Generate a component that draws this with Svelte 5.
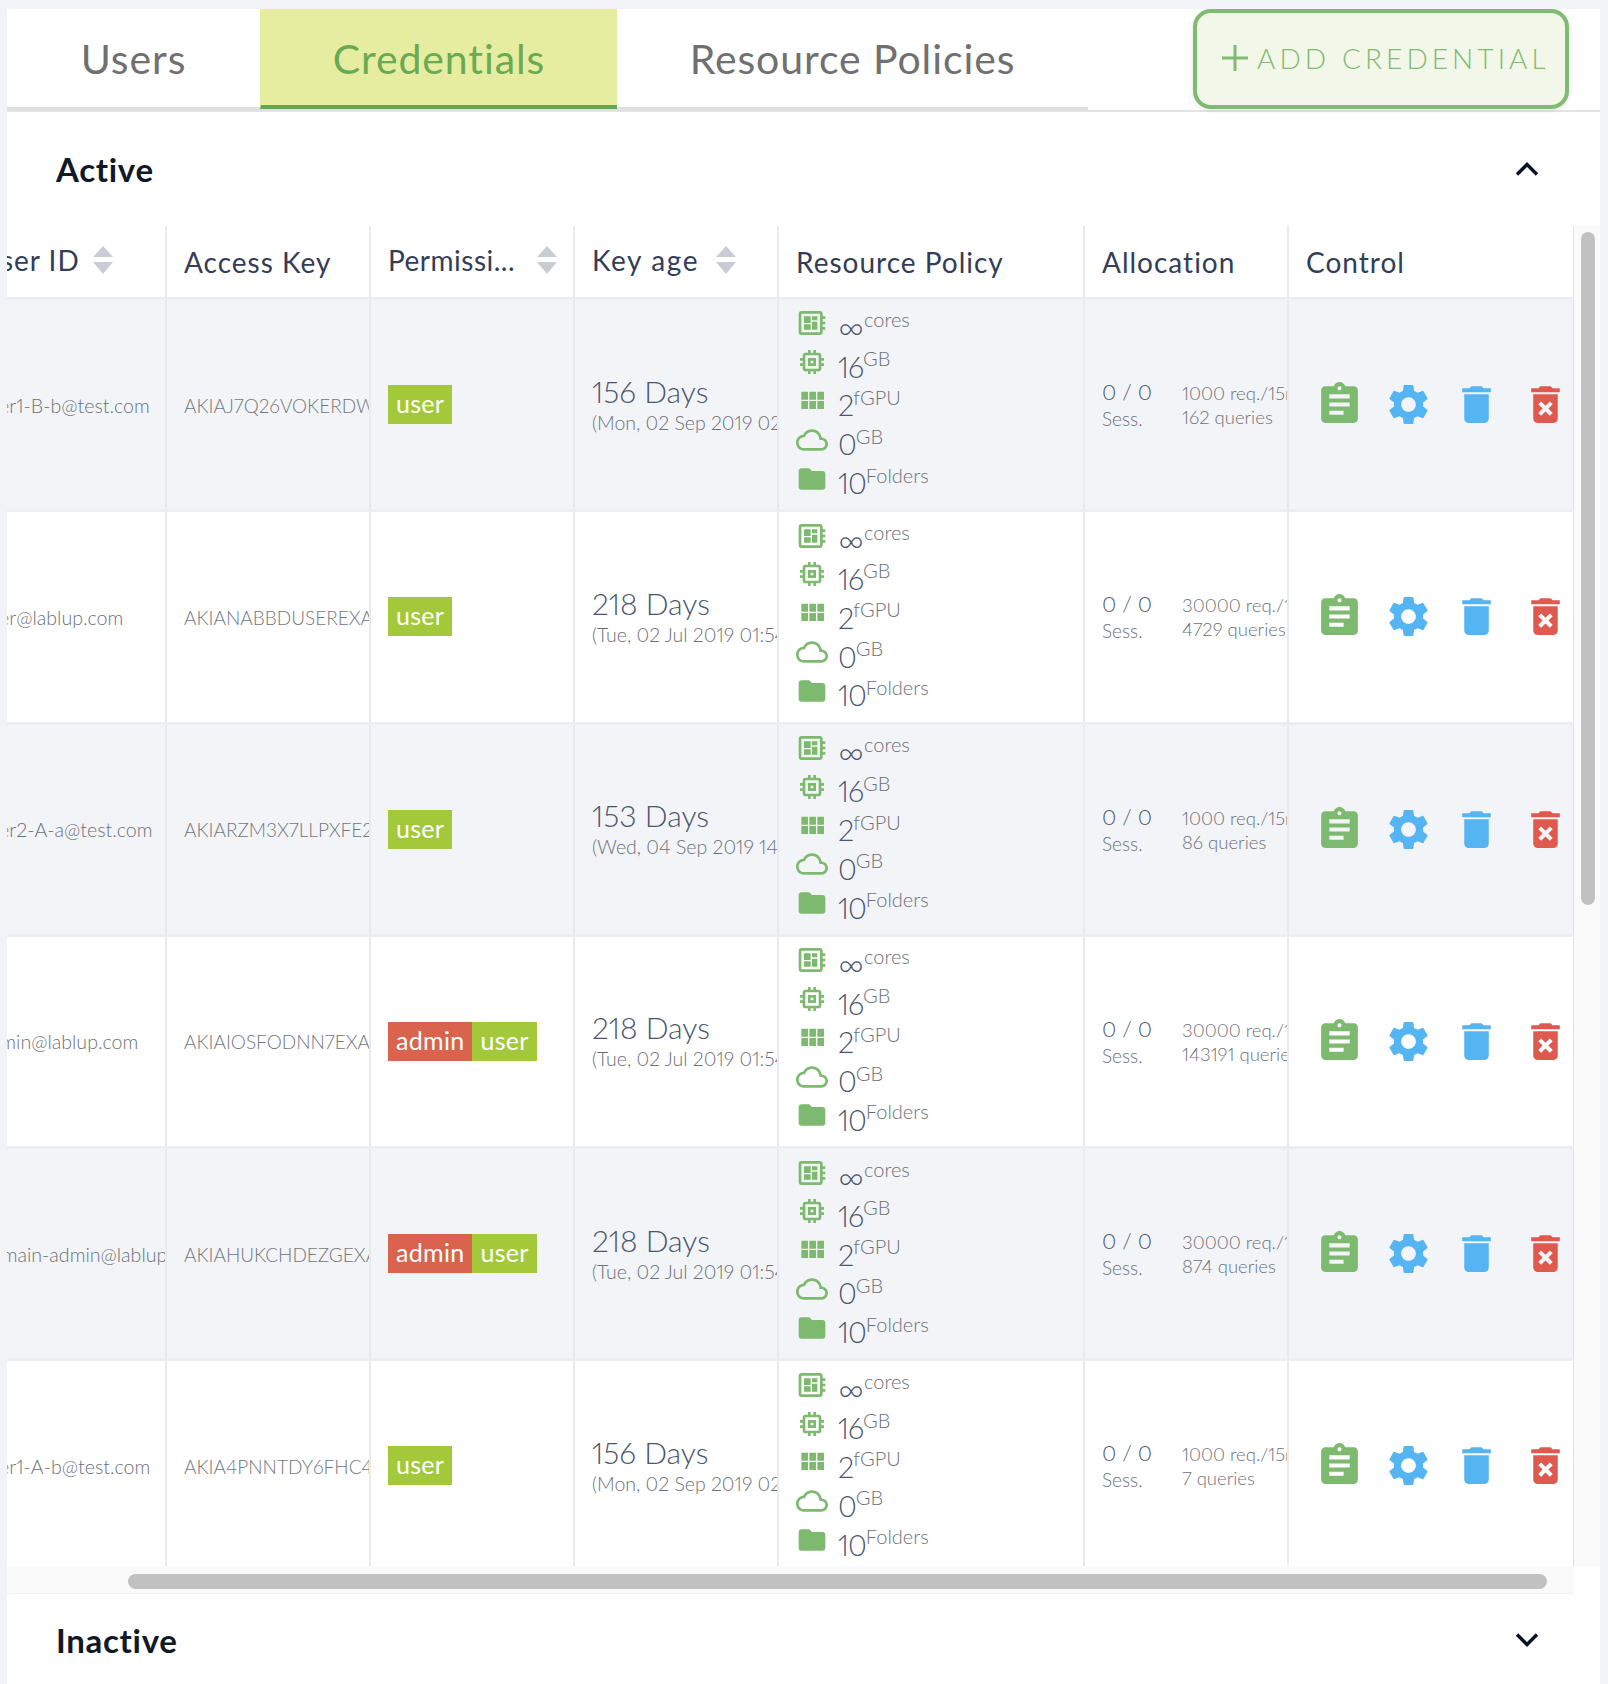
<script>
  const rows = [
    { id: 'user1-B-b@test.com', key: 'AKIAJ7Q26VOKERDWEXAMPLE', perms: ['user'], days: '156 Days', date: '(Mon, 02 Sep 2019 02:41:07 GMT)', limit: '1000 req./15min', q: '162 queries' },
    { id: 'user@lablup.com', key: 'AKIANABBDUSEREXAMPLE', perms: ['user'], days: '218 Days', date: '(Tue, 02 Jul 2019 01:54:20 GMT)', limit: '30000 req./15min', q: '4729 queries' },
    { id: 'user2-A-a@test.com', key: 'AKIARZM3X7LLPXFE2EXAMPLE', perms: ['user'], days: '153 Days', date: '(Wed, 04 Sep 2019 14:41:07 GMT)', limit: '1000 req./15min', q: '86 queries' },
    { id: 'admin@lablup.com', key: 'AKIAIOSFODNN7EXAMPLE', perms: ['admin', 'user'], days: '218 Days', date: '(Tue, 02 Jul 2019 01:54:20 GMT)', limit: '30000 req./15min', q: '143191 queries' },
    { id: 'domain-admin@lablup.com', key: 'AKIAHUKCHDEZGEXAMPLE', perms: ['admin', 'user'], days: '218 Days', date: '(Tue, 02 Jul 2019 01:54:20 GMT)', limit: '30000 req./15min', q: '874 queries' },
    { id: 'user1-A-b@test.com', key: 'AKIA4PNNTDY6FHC4QEXAMPLE', perms: ['user'], days: '156 Days', date: '(Mon, 02 Sep 2019 02:11:07 GMT)', limit: '1000 req./15min', q: '7 queries' }
  ];
  const resources = [
    { d: 'M22 9V7h-2V5c0-1.1-.9-2-2-2H4c-1.1 0-2 .9-2 2v14c0 1.1.9 2 2 2h14c1.1 0 2-.9 2-2v-2h2v-2h-2v-2h2v-2h-2V9h2zm-4 10H4V5h14v14zM6 13h5v4H6zm6-6h4v3h-4zM6 7h5v5H6zm6 4h4v6h-4z', v: '∞', u: 'cores', inf: true },
    { d: 'M15 9H9v6h6V9zm-2 4h-2v-2h2v2zm8-2V9h-2V7c0-1.1-.9-2-2-2h-2V3h-2v2h-2V3H9v2H7c-1.1 0-2 .9-2 2v2H3v2h2v2H3v2h2v2c0 1.1.9 2 2 2h2v2h2v-2h2v2h2v-2h2c1.1 0 2-.9 2-2v-2h2v-2h-2v-2h2zm-4 6H7V7h10v10z', v: '16', u: 'GB' },
    { d: 'M4 11h5V5H4v6zm0 7h5v-6H4v6zm6 0h5v-6h-5v6zm6 0h5v-6h-5v6zm-6-7h5V5h-5v6zm6-6v6h5V5h-5z', v: '2', u: 'fGPU' },
    { d: 'M19.35 10.04C18.67 6.59 15.64 4 12 4 9.11 4 6.6 5.64 5.35 8.04 2.34 8.36 0 10.91 0 14c0 3.31 2.69 6 6 6h13c2.76 0 5-2.24 5-5 0-2.64-2.05-4.78-4.65-4.96zM19 18H6c-2.21 0-4-1.79-4-4s1.79-4 4-4h.71C7.37 7.69 9.48 6 12 6c3.04 0 5.5 2.46 5.5 5.5v.5H19c1.66 0 3 1.34 3 3s-1.34 3-3 3z', v: '0', u: 'GB' },
    { d: 'M10 4H4c-1.1 0-1.99.9-1.99 2L2 18c0 1.1.9 2 2 2h16c1.1 0 2-.9 2-2V8c0-1.1-.9-2-2-2h-8l-2-2z', v: '10', u: 'Folders' }
  ];
  const controls = [
    { c: 'green', d: 'M19 3h-4.18C14.4 1.84 13.3 1 12 1c-1.3 0-2.4.84-2.82 2H5c-1.1 0-2 .9-2 2v14c0 1.1.9 2 2 2h14c1.1 0 2-.9 2-2V5c0-1.1-.9-2-2-2zm-7 0c.55 0 1 .45 1 1s-.45 1-1 1-1-.45-1-1 .45-1 1-1zm2 14H7v-2h7v2zm3-4H7v-2h10v2zm0-4H7V7h10v2z' },
    { c: 'blue', d: 'M19.14 12.94c.04-.3.06-.61.06-.94 0-.32-.02-.64-.07-.94l2.03-1.58c.18-.14.23-.41.12-.61l-1.92-3.32c-.12-.22-.37-.29-.59-.22l-2.39.96c-.5-.38-1.03-.7-1.62-.94l-.36-2.54c-.04-.24-.24-.41-.48-.41h-3.84c-.24 0-.43.17-.47.41l-.36 2.54c-.59.24-1.13.57-1.62.94l-2.39-.96c-.22-.08-.47 0-.59.22L2.74 8.87c-.12.21-.08.47.12.61l2.03 1.58c-.05.3-.09.63-.09.94s.02.64.07.94l-2.03 1.58c-.18.14-.23.41-.12.61l1.92 3.32c.12.22.37.29.59.22l2.39-.96c.5.38 1.03.7 1.62.94l.36 2.54c.05.24.24.41.48.41h3.84c.24 0 .44-.17.47-.41l.36-2.54c.59-.24 1.13-.56 1.62-.94l2.39.96c.22.08.47 0 .59-.22l1.92-3.32c.12-.22.07-.47-.12-.61l-2.01-1.58zM12 15.6c-1.98 0-3.6-1.62-3.6-3.6s1.62-3.6 3.6-3.6 3.6 1.62 3.6 3.6-1.62 3.6-3.6 3.6z' },
    { c: 'blue', d: 'M6 19c0 1.1.9 2 2 2h8c1.1 0 2-.9 2-2V7H6v12zM19 4h-3.5l-1-1h-5l-1 1H5v2h14V4z' },
    { c: 'red', d: 'M6 19c0 1.1.9 2 2 2h8c1.1 0 2-.9 2-2V7H6v12zm2.46-7.12l1.41-1.41L12 12.59l2.12-2.12 1.41 1.41L13.41 14l2.12 2.12-1.41 1.41L12 15.41l-2.12 2.12-1.41-1.41L10.59 14l-2.13-2.12zM15.5 4l-1-1h-5l-1 1H5v2h14V4z' }
  ];
</script>

{#snippet sortArrows()}
  <svg class="sort" viewBox="0 0 20 28" width="20" height="28" aria-hidden="true">
    <path d="M10 0l10 11H0z" /><path d="M10 28L0 16h20z" />
  </svg>
{/snippet}

<div class="card">
  <div class="topbar">
    <nav class="tabs">
      <div class="tab users">Users</div>
      <div class="tab active">Credentials</div>
      <div class="tab policies">Resource Policies</div>
    </nav>
    <button class="add">
      <svg viewBox="0 0 26 26" width="26" height="26" aria-hidden="true"><path d="M13 0v26M0 13h26" /></svg>
      <span>ADD CREDENTIAL</span>
    </button>
  </div>

  <section class="panel-head first">
    <h2>Active</h2>
    <svg class="chev" viewBox="0 0 24 14" width="24" height="14" aria-hidden="true"><path d="M2 12.5L12 2.5l10 10" /></svg>
  </section>

  <div class="grid-wrap">
    <div class="viewport">
      <table>
        <colgroup>
          <col class="c204" /><col class="c204" /><col class="c204" /><col class="c204" /><col class="c306" /><col class="c204" /><col class="c286" />
        </colgroup>
        <thead>
          <tr>
            <th><div class="th sorted"><span class="label uid">User ID</span>{@render sortArrows()}</div></th>
            <th><div class="th">Access Key</div></th>
            <th><div class="th sorted"><span class="label perm">Permissi...</span>{@render sortArrows()}</div></th>
            <th><div class="th sorted"><span class="label age">Key age</span>{@render sortArrows()}</div></th>
            <th><div class="th">Resource Policy</div></th>
            <th><div class="th">Allocation</div></th>
            <th><div class="th">Control</div></th>
          </tr>
        </thead>
        <tbody>
          {#each rows as r}
            <tr>
              <td><div class="cell mail">{r.id}</div></td>
              <td><div class="cell key">{r.key}</div></td>
              <td>
                <div class="cell badges">
                  {#each r.perms as p}<span class="badge {p}">{p}</span>{/each}
                </div>
              </td>
              <td>
                <div class="cell age-cell">
                  <div class="days">{r.days}</div>
                  <div class="date">{r.date}</div>
                </div>
              </td>
              <td>
                <div class="res">
                  {#each resources as x}
                    <div class="res-row">
                      <svg viewBox="0 0 24 24" width="32" height="32" aria-hidden="true"><path d={x.d} /></svg>
                      <span class="val" class:inf={x.inf}>{x.v}</span><sup>{x.u}</sup>
                    </div>
                  {/each}
                </div>
              </td>
              <td>
                <div class="alloc">
                  <div class="sess"><div class="count">0 / 0</div><div class="small">Sess.</div></div>
                  <div class="limit"><div>{r.limit}</div><div>{r.q}</div></div>
                </div>
              </td>
              <td>
                <div class="ctrls">
                  {#each controls as c}
                    <svg class={c.c} viewBox="0 0 24 24" width="49" height="49" aria-hidden="true"><path d={c.d} /></svg>
                  {/each}
                </div>
              </td>
            </tr>
          {/each}
        </tbody>
      </table>
    </div>
    <div class="vbar"><div class="vthumb"></div></div>
    <div class="hbar"><div class="hthumb"></div></div>
  </div>

  <section class="panel-head last">
    <h2>Inactive</h2>
    <svg class="chev" viewBox="0 0 24 14" width="24" height="14" aria-hidden="true"><path d="M2 1.5l10 10 10-10" /></svg>
  </section>
</div>

<style>
  :global(body) { background: #f2f3f6; overflow: hidden; }
  .card {
    margin: 9px 8px 0 7px;
    height: 1675px;
    background: #fff;
    font-family: Lato, "Open Sans", sans-serif;
    font-variant-numeric: proportional-nums;
    overflow: hidden;
  }
  .topbar { display: flex; height: 101px; border-bottom: 2px solid #e4e4e4; box-sizing: content-box; }
  .tabs { display: flex; width: 1081px; height: 102px; border-bottom: 4px solid #e0e0e0; box-sizing: border-box; }
  .tab { font-size: 41px; font-weight: 400; color: #707070; height: 100px; line-height: 100px; box-sizing: border-box; white-space: nowrap; text-align: center; letter-spacing: .9px; }
  .users { width: 253px; }
  .active { width: 357px; background: #e6eda1; color: #6aaa52; border-left: 1px solid #e6eda1; border-bottom: 4px solid #64a84d; }
  .policies { width: 471px; }
  .add {
    margin-left: 105px; width: 376px; height: 100px; box-sizing: border-box;
    display: flex; align-items: center; padding: 0 0 2px 25px; gap: 9px;
    background: #f3f7e9; border: 4px solid #7fbb72; border-radius: 18px;
    color: #7fbb72; font: 300 28px Lato, sans-serif; letter-spacing: 4.1px; white-space: nowrap;
    box-shadow: 0 1px 5px rgba(0,0,0,.12);
  }
  .add svg { flex: none; }
  .add path { stroke: #7fbb72; stroke-width: 3; fill: none; }
  .panel-head { display: flex; justify-content: space-between; align-items: center; padding: 0 61px 0 49px; box-sizing: border-box; }
  .panel-head.first { height: 114px; }
  .panel-head.last { height: 90px; padding-top: 2px; }
  h2 { margin: 0; font-size: 33px; font-weight: 700; color: #111827; letter-spacing: .7px; }
  .chev path { fill: none; stroke: #0c1226; stroke-width: 3.4; }
  .grid-wrap {
    display: grid;
    grid-template-columns: 1567px 26px;
    grid-template-rows: 1340px 28px;
  }
  .viewport { overflow: hidden; }
  table {
    border-collapse: separate; border-spacing: 0; table-layout: fixed;
    width: 1612px; margin-left: -44px;
    color: #3a445c;
  }
  .c204 { width: 204px; }
  .c306 { width: 306px; }
  .c286 { width: 286px; }
  th { padding: 0; height: 74px; background: #fff; border-right: 2px solid #e8eaef; border-bottom: 3px solid #eceef2; font-weight: 400; text-align: left; box-sizing: border-box; }
  th:last-child, td:last-child { border-right: 2px solid #e0e1e5; }
  .th { display: flex; align-items: center; margin-top: -3px; padding: 3px 0 0 17px; font-size: 28px; color: #333d58; white-space: nowrap; letter-spacing: 1px; }
  .th.sorted { padding-top: 0; }
  .label.uid { width: 113px; }
  .label.perm { width: 149px; letter-spacing: .5px; }
  .label.age { width: 124px; letter-spacing: 1.6px; }
  .sort { flex: none; }
  .sort path { fill: #c9cdd3; }
  td { padding: 0; height: 212.3px; border-right: 2px solid #e8eaef; border-bottom: 3px solid #eceef2; box-sizing: border-box; vertical-align: top; overflow: hidden; }
  tbody tr:nth-child(odd) td { background: #f2f4f7; }
  tbody tr:nth-child(even) td { background: #fff; }
  .cell { height: 209px; display: flex; align-items: center; padding-left: 17px; white-space: nowrap; overflow: hidden; font-size: 19.6px; color: #6c7177; font-weight: 300; box-sizing: border-box; }
  .mail { padding-top: 1px; }
  .key { padding-top: 1px; color: #73787e; font-size: 19px; }
  .badge { display: inline-block; height: 39px; line-height: 36px; font-size: 25px; color: #fff; padding: 0 8px; font-weight: 400; letter-spacing: .3px; }
  .badge.user { background: #a3c93a; }
  .badge.admin { background: #d9634c; }
  .age-cell { flex-direction: column; align-items: flex-start; justify-content: center; padding-bottom: 2px; }
  .days { font-size: 30px; font-weight: 300; color: #4b556c; line-height: 38px; }
  .date { font-size: 19.5px; font-weight: 300; color: #6c7177; line-height: 26px; }
  .res { padding: 4px 0 0 17px; height: 202px; }
  .res-row { height: 38.8px; display: flex; align-items: center; }
  .res-row svg { flex: none; margin-right: 10px; }
  .res-row path { fill: #7db96e; }
  .val { font-size: 29px; font-weight: 300; color: #4b556c; position: relative; top: 4px; letter-spacing: -1px; }
  .val.inf { font-size: 35px; line-height: 30px; top: 3px; letter-spacing: 0; }
  sup { font-size: 20px; font-weight: 300; color: #6c7177; line-height: 1; position: relative; top: -4px; vertical-align: baseline; }
  .alloc { height: 209px; display: flex; align-items: center; padding: 1px 0 0 17px; box-sizing: border-box; white-space: nowrap; overflow: hidden; color: #6c7177; font-weight: 300; }
  .sess { width: 80px; flex: none; }
  .count { font-size: 22px; color: #4b556c; line-height: 28px; }
  .small { font-size: 19px; line-height: 26px; }
  .limit { font-size: 18.5px; line-height: 24px; }
  .ctrls { height: 209px; display: flex; align-items: center; padding: 0 0 0 26px; gap: 19.5px; box-sizing: border-box; }
  .ctrls svg { flex: none; }
  .ctrls .green path { fill: #7db96e; }
  .ctrls .blue path { fill: #55b4f2; }
  .ctrls .red path { fill: #e0594f; }
  .vbar { background: #fafafa; }
  .vthumb { width: 14px; height: 673px; margin: 6px 0 0 7px; background: #c1c1c1; border-radius: 7px; }
  .hbar { grid-column: 1; background: #fafafa; border-bottom: 1px solid #f0f1f3; padding: 8px 0 0 121px; box-sizing: border-box; }
  .hthumb { width: 1419px; height: 15px; background: #c1c1c1; border-radius: 8px; }
</style>
